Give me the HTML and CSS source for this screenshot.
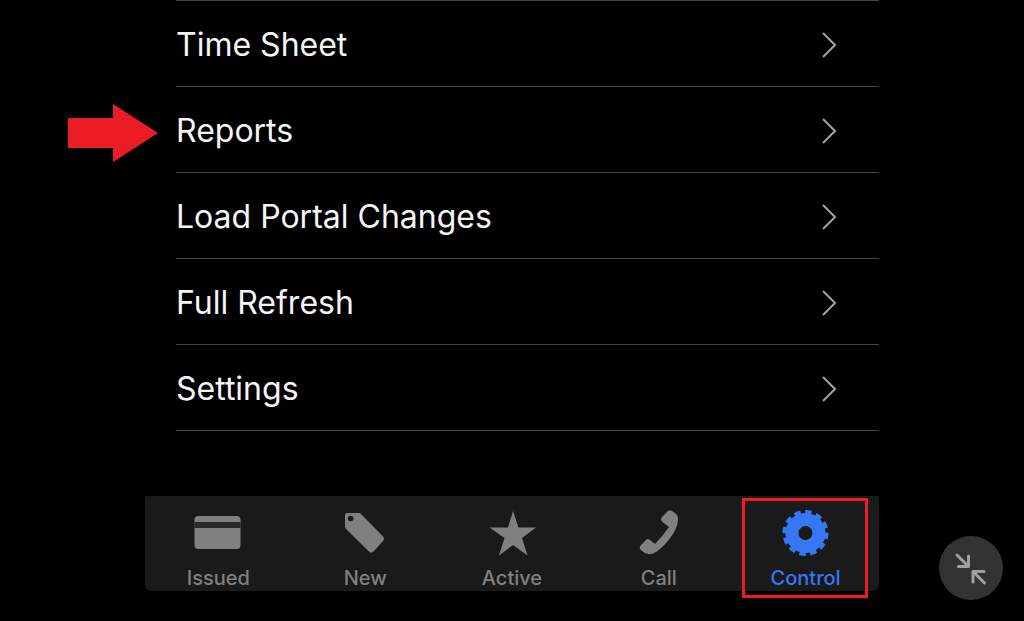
FILE: index.html
```html
<!DOCTYPE html>
<html lang="en">
<head>
    <meta charset="UTF-8">
    <meta name="viewport" content="width=device-width, initial-scale=1.0">
    <title>Control</title>
    <link rel="stylesheet" href="styles.css">
</head>
<body>
    <main class="screen">
        <ul class="menu">
            <li><a href="#time-sheet">Time Sheet
                <svg class="chevron" viewBox="0 0 16 28"><path d="M2 2 L14 14 L2 26"/></svg></a></li>
            <li>
                <svg class="pointer" viewBox="0 0 90 58"><path d="M0 14 H45 V0 L90 29 L45 58 V44 H0 Z"/></svg>
                <a href="#reports">Reports
                <svg class="chevron" viewBox="0 0 16 28"><path d="M2 2 L14 14 L2 26"/></svg></a></li>
            <li><a href="#portal">Load Portal Changes
                <svg class="chevron" viewBox="0 0 16 28"><path d="M2 2 L14 14 L2 26"/></svg></a></li>
            <li><a href="#refresh">Full Refresh
                <svg class="chevron" viewBox="0 0 16 28"><path d="M2 2 L14 14 L2 26"/></svg></a></li>
            <li><a href="#settings">Settings
                <svg class="chevron" viewBox="0 0 16 28"><path d="M2 2 L14 14 L2 26"/></svg></a></li>
        </ul>

        <nav class="tabs">
            <a class="tab" href="#issued">
                <svg class="icon" viewBox="0 0 48 48">
                    <rect x="0.500" y="7" width="46" height="33" rx="4"/>
                    <rect x="0.500" y="13" width="46" height="6" fill="#2a2a2a"/>
                </svg>
                Issued
            </a>
            <a class="tab" href="#new">
                <svg class="icon" viewBox="0 0 48 48">
                    <path fill-rule="evenodd" d="M4 6 Q4 4 6 4 H17.500 Q19 4 20 5 L42 27.500 Q44 30 42 32 L33 42 Q30.500 45 28 42.500 L5 20 Q4 19 4 17 Z M12.500 9.500 A2.800 2.800 0 1 0 6.900 9.500 A2.800 2.800 0 1 0 12.500 9.500 Z"/>
                </svg>
                New
            </a>
            <a class="tab" href="#active">
                <svg class="icon" viewBox="0 0 48 48">
                    <path d="M25 2 L30.500 18.500 H48 L34 29 L39.500 46.500 L25 36 L11 46.500 L16.500 29 L1.500 18.500 H20 Z"/>
                </svg>
                Active
            </a>
            <a class="tab" href="#call">
                <svg class="icon" viewBox="0 0 48 48">
                    <path d="M27 8 L33 2 Q35 0.500 37 2 Q43 5 43 10 Q43 17 38 25 Q31 36 21 43 Q13 48 7 42 L5 40 Q4 38 6 36 L11 31 Q13 29 15 31 L20 35 Q27 28 34 18 L27.500 13 Q25 10.500 27 8 Z"/>
                </svg>
                Call
            </a>
            <a class="tab active" href="#control">
                <svg class="icon" viewBox="0 0 48 48">
                    <g fill="none" stroke="currentColor" transform="rotate(8 23.500 24)">
                        <circle cx="23.500" cy="24" r="13.500" stroke-width="13"/>
                        <circle cx="23.500" cy="24" r="21" stroke-width="4" pathLength="120" stroke-dasharray="6 4" stroke-dashoffset="3"/>
                    </g>
                </svg>
                Control
            </a>
        </nav>
    </main>

    <button class="shrink" type="button" aria-label="Exit full screen">
        <svg viewBox="0 0 64 64"><path d="M18 19 L29 30 M29.500 20 V30.500 H19.500 M45.500 47 L34 35.500 M34 46 V35.500 H45"/></svg>
    </button>
</body>
</html>
```
FILE: styles.css
```css
* {
    box-sizing: border-box;
}

body {
    margin: 0;
    min-height: 100vh;
    background-color: #000;
    color: #f5f5f5;
    font-family: Inter, "Liberation Sans", sans-serif;
}

a {
    color: inherit;
    text-decoration: none;
}

.screen {
    margin: 0 145px;
}

.menu {
    list-style: none;
    margin: 0 0 65px 31px;
    padding: 0;
    border-top: 1px solid #464646;
}

.menu li {
    position: relative;
    border-bottom: 1px solid #464646;
}

.menu a {
    display: flex;
    align-items: center;
    justify-content: space-between;
    padding: 24px 42px 21px 0;
    font-size: 32px;
    line-height: 40px;
}

.chevron {
    width: 16px;
    height: 28px;
    fill: none;
    stroke: #a3a3a3;
    stroke-width: 2;
}

/* red arrow beside the row */
.pointer {
    position: absolute;
    left: -108px;
    top: 17px;
    width: 90px;
    height: 58px;
    fill: #ec1c24;
}

.tabs {
    display: grid;
    grid-template-columns: repeat(5, 1fr);
    background-color: #1a1a1a;
    border-radius: 2px 2px 7px 7px;
}

.tab {
    position: relative;
    display: flex;
    flex-direction: column;
    align-items: center;
    gap: 10px;
    padding: 13px 0 2px;
    color: #808080;
    font-size: 20px;
    font-weight: 500;
    line-height: 22px;
}

.icon {
    width: 48px;
    height: 48px;
    fill: currentColor;
}

.tab.active {
    color: #3478f6;
}

/* highlight frame */
.tab.active::after {
    content: "";
    position: absolute;
    inset: 2px 11px -7px 10px;
    border: 3px solid #ec1c24;
}

.shrink {
    position: fixed;
    right: 21px;
    bottom: 21px;
    width: 64px;
    height: 64px;
    padding: 0;
    border: none;
    border-radius: 50%;
    background-color: #333;
    cursor: pointer;
}

.shrink svg {
    display: block;
    fill: none;
    stroke: #a0a0a0;
    stroke-width: 3;
    stroke-linecap: round;
    stroke-linejoin: round;
}
```
